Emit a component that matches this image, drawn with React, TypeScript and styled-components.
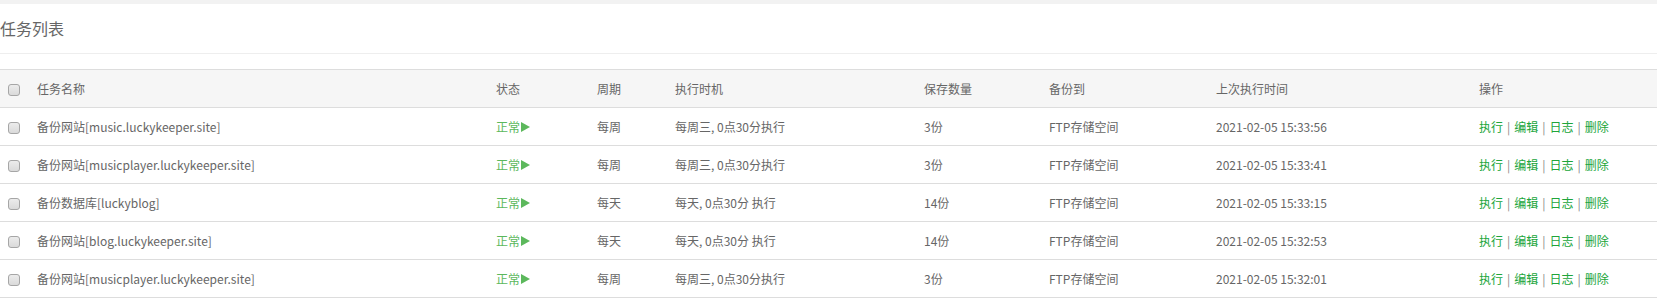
import React from 'react';
import styled, { createGlobalStyle } from 'styled-components';

const GlobalStyle = createGlobalStyle`
  html, body {
    margin: 0;
    padding: 0;
    background: #f2f2f2;
  }
  body {
    font-family: "Noto Sans CJK SC", "Liberation Sans", sans-serif;
    color: #666;
  }
`;

const Page = styled.div`
  padding-top: 4px;
  background: #f2f2f2;
`;

const Panel = styled.div`
  background: #fff;
  min-height: 296px;
`;

const Title = styled.div`
  height: 49px;
  line-height: 49px;
  font-size: 16px;
  color: #666;
  border-bottom: 1px solid #eee;
`;

const Body = styled.div`
  padding-top: 15px;
`;

const Table = styled.table`
  width: 100%;
  table-layout: fixed;
  border-collapse: separate;
  border-spacing: 0;
  font-size: 12px;
`;

const Th = styled.th`
  text-align: left;
  font-weight: normal;
  color: #666;
  line-height: 37px;
  padding: 0 8px;
  background: #f6f6f6;
  border-top: 1px solid #ddd;
  border-bottom: 1px solid #ddd;
  white-space: nowrap;
`;

const Td = styled.td`
  color: #666;
  line-height: 37px;
  padding: 0 8px;
  border-bottom: 1px solid #ddd;
  white-space: nowrap;
`;

const Check = styled.input.attrs({ type: 'checkbox' })`
  appearance: none;
  display: inline-block;
  width: 12px;
  height: 12px;
  margin: 0;
  vertical-align: middle;
  box-sizing: border-box;
  border: 1px solid #a6a6a6;
  border-radius: 3px;
  background: linear-gradient(#ececec, #dadada);
  position: relative;
  top: -1px;
`;

const Status = styled.span`
  color: #5cb85c;
  display: inline-flex;
  align-items: center;
`;

const Play = styled.svg`
  width: 9px;
  height: 10px;
  margin-left: 1px;
  fill: #5cb85c;
`;

const Link = styled.a`
  color: #20a53a;
  text-decoration: none;
  cursor: pointer;
`;

const Sep = styled.span`
  color: #888;
  margin: 0 4px;
`;

const columns = [29, 459, 101, 78, 249, 125, 167, 263, 186];

type Task = {
  name: string;
  cycle: string;
  when: string;
  keep: string;
  target: string;
  last: string;
};

const tasks: Task[] = [
  { name: '备份网站[music.luckykeeper.site]', cycle: '每周', when: '每周三, 0点30分执行', keep: '3份', target: 'FTP存储空间', last: '2021-02-05 15:33:56' },
  { name: '备份网站[musicplayer.luckykeeper.site]', cycle: '每周', when: '每周三, 0点30分执行', keep: '3份', target: 'FTP存储空间', last: '2021-02-05 15:33:41' },
  { name: '备份数据库[luckyblog]', cycle: '每天', when: '每天, 0点30分 执行', keep: '14份', target: 'FTP存储空间', last: '2021-02-05 15:33:15' },
  { name: '备份网站[blog.luckykeeper.site]', cycle: '每天', when: '每天, 0点30分 执行', keep: '14份', target: 'FTP存储空间', last: '2021-02-05 15:32:53' },
  { name: '备份网站[musicplayer.luckykeeper.site]', cycle: '每周', when: '每周三, 0点30分执行', keep: '3份', target: 'FTP存储空间', last: '2021-02-05 15:32:01' },
];

const actions = ['执行', '编辑', '日志', '删除'];

const Actions = () => (
  <>
    {actions.map((a, i) => (
      <React.Fragment key={a}>
        {i > 0 && <Sep>|</Sep>}
        <Link>{a}</Link>
      </React.Fragment>
    ))}
  </>
);

const App = () => {
  return (
    <>
      <GlobalStyle />
      <Page>
        <Panel>
          <Title>任务列表</Title>
          <Body>
            <Table>
              <colgroup>
                {columns.map((w, i) => (
                  <col key={i} style={{ width: w }} />
                ))}
              </colgroup>
              <thead>
                <tr>
                  <Th><Check /></Th>
                  <Th>任务名称</Th>
                  <Th>状态</Th>
                  <Th>周期</Th>
                  <Th>执行时机</Th>
                  <Th>保存数量</Th>
                  <Th>备份到</Th>
                  <Th>上次执行时间</Th>
                  <Th>操作</Th>
                </tr>
              </thead>
              <tbody>
                {tasks.map((t, i) => (
                  <tr key={i}>
                    <Td><Check /></Td>
                    <Td>{t.name}</Td>
                    <Td>
                      <Status>
                        正常
                        <Play viewBox="0 0 9 10">
                          <path d="M0 0 L9 5 L0 10 Z" />
                        </Play>
                      </Status>
                    </Td>
                    <Td>{t.cycle}</Td>
                    <Td>{t.when}</Td>
                    <Td>{t.keep}</Td>
                    <Td>{t.target}</Td>
                    <Td>{t.last}</Td>
                    <Td><Actions /></Td>
                  </tr>
                ))}
              </tbody>
            </Table>
          </Body>
        </Panel>
      </Page>
    </>
  );
};

export default App;
